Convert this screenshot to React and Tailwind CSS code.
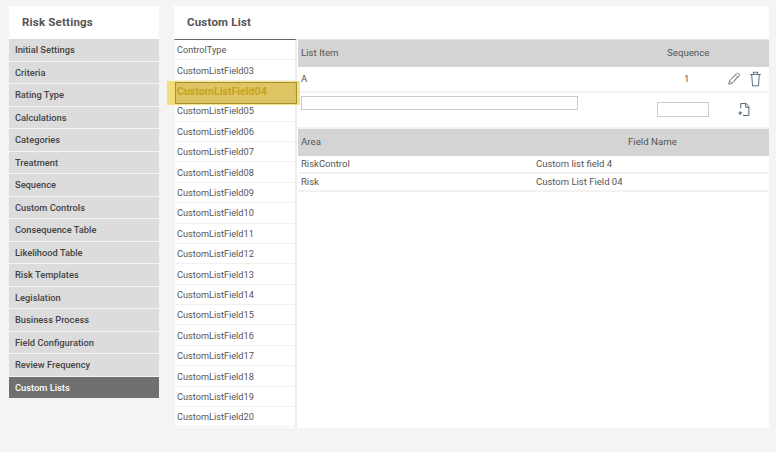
import React from 'react'

const settings = ['Initial Settings', 'Criteria', 'Rating Type', 'Calculations', 'Categories', 'Treatment', 'Sequence', 'Custom Controls', 'Consequence Table', 'Likelihood Table', 'Risk Templates', 'Legislation', 'Business Process', 'Field Configuration', 'Review Frequency', 'Custom Lists']

const fields = ['ControlType', 'CustomListField03', 'CustomListField04', 'CustomListField05', 'CustomListField06', 'CustomListField07', 'CustomListField08', 'CustomListField09', 'CustomListField10', 'CustomListField11', 'CustomListField12', 'CustomListField13', 'CustomListField14', 'CustomListField15', 'CustomListField16', 'CustomListField17', 'CustomListField18', 'CustomListField19', 'CustomListField20']

function App() {
    return (
        <div className="w-[776px] h-[452px] bg-[#f4f4f4] flex items-start pt-[6px] pl-[9px] overflow-hidden font-['Roboto',sans-serif] text-[#555]">
            <div className="w-[150px] shrink-0">
                <div className="h-[33px] bg-white flex items-center pl-[13px] text-[11.5px] font-bold text-[#555] tracking-[0.2px]">Risk Settings</div>
                <div className="grid grid-rows-[repeat(16,21.5px)] gap-y-[1px]">
                    {settings.map(s => (
                        <div key={s} className={s === 'Custom Lists'
                            ? 'bg-[#6f6f6f] text-white flex items-center pl-[6px] pt-[1px] text-[9.3px] font-medium'
                            : 'bg-[#dcdcdc] text-[#444] flex items-center pl-[6px] pt-[1px] text-[9.3px] font-medium'}>
                            {s}
                        </div>
                    ))}
                </div>
            </div>

            <div className="relative ml-[15px] w-[595px] h-[422px] bg-white">
                <div className="h-[33px] flex items-center pl-[13px] text-[11.5px] font-bold text-[#555] tracking-[0.2px]">Custom List</div>
                <div className="flex h-[389px]">
                    <div className="w-[123px] shrink-0 border-t border-t-[#666] border-l border-l-[#f4f4f4] border-r-2 border-r-[#eeeeee]">
                        {fields.map(f => (
                            <div key={f} className={f === 'CustomListField04'
                                ? 'h-[20.4px] flex items-center pl-[2px] pt-[2px] text-[10.6px] font-bold text-[#b39a30] border-b border-[#f0f0f0]'
                                : 'h-[20.4px] flex items-center pl-[2px] pt-[1px] text-[9.2px] text-[#555] border-b border-[#f0f0f0]'}>
                                {f}
                            </div>
                        ))}
                    </div>

                    <div className="w-[471px] ml-[1px] text-[9.5px] text-[#555]">
                        <div className="h-[28px] bg-[#d4d4d4] border-t border-[#e4e4e4] flex items-center pl-[3px] text-[9.7px]">
                            <div className="w-[366px]">List Item</div>
                            <div>Sequence</div>
                        </div>
                        <div className="h-[26px] border-b-2 border-[#f2f2f2] flex items-center pl-[3px]">
                            <div className="w-[383px]">A</div>
                            <div className="w-[43px]">1</div>
                            <svg width="14" height="14" viewBox="0 0 24 24" fill="none" stroke="#5d6f7c" strokeWidth="1.6">
                                <path d="M3 21l1.5-6L16.5 3c1-1 3-1 4 0s1 3 0 4L8.5 19.5z" />
                                <path d="M14.5 5l4.5 4.5M5 15l4 4M8 11.5l7-7M11.5 15l7-7" strokeWidth="1" />
                            </svg>
                            <svg width="13" height="16" viewBox="0 0 22 27" fill="none" stroke="#5d6f7c" strokeWidth="1.7" className="ml-[8px]">
                                <path d="M2 6h18M7.5 6V2h7v4M4.5 6L6 25h10l1.5-19" />
                            </svg>
                        </div>
                        <div className="h-[36px] border-b-2 border-[#f2f2f2] relative pl-[3px] pt-[3px] flex items-start">
                            <input className="w-[277px] h-[14px] border border-[#c5ced6] bg-white" />
                            <input className="w-[52px] h-[15px] border border-[#c5ced6] bg-white ml-[79px] mt-[6px]" />
                            <svg width="13" height="15" viewBox="0 0 24 26" fill="none" stroke="#4f6070" strokeWidth="1.8" className="ml-[28px] mt-[6px]">
                                <path d="M7 11V2h10l5 6v16H11" />
                                <path d="M16 2v7h6" />
                                <path d="M6 16v7M2.5 19.5h7" strokeWidth="2" />
                            </svg>
                        </div>
                        <div className="h-[27px] bg-[#d4d4d4] flex items-center pl-[3px] text-[9.7px]">
                            <div className="w-[327px]">Area</div>
                            <div>Field Name</div>
                        </div>
                        <div className="h-[18px] border-b-2 border-[#f2f2f2] flex items-center pl-[3px] pt-[1px]">
                            <div className="w-[235px]">RiskControl</div>
                            <div>Custom list field 4</div>
                        </div>
                        <div className="h-[18px] border-b-2 border-[#f2f2f2] flex items-center pl-[3px] pt-[1px]">
                            <div className="w-[235px]">Risk</div>
                            <div>Custom List Field 04</div>
                        </div>
                    </div>
                </div>

                <div className="absolute left-[-7px] top-[75px] w-[133px] h-[24px] bg-[#f7c600]/50 pointer-events-none">
                    <div className="absolute left-[8px] top-[1px] bottom-[1px] w-[122px] border border-[#8f7a28]/70 bg-[#a89030]/35"></div>
                </div>
            </div>
        </div>
    )
}

export default App
